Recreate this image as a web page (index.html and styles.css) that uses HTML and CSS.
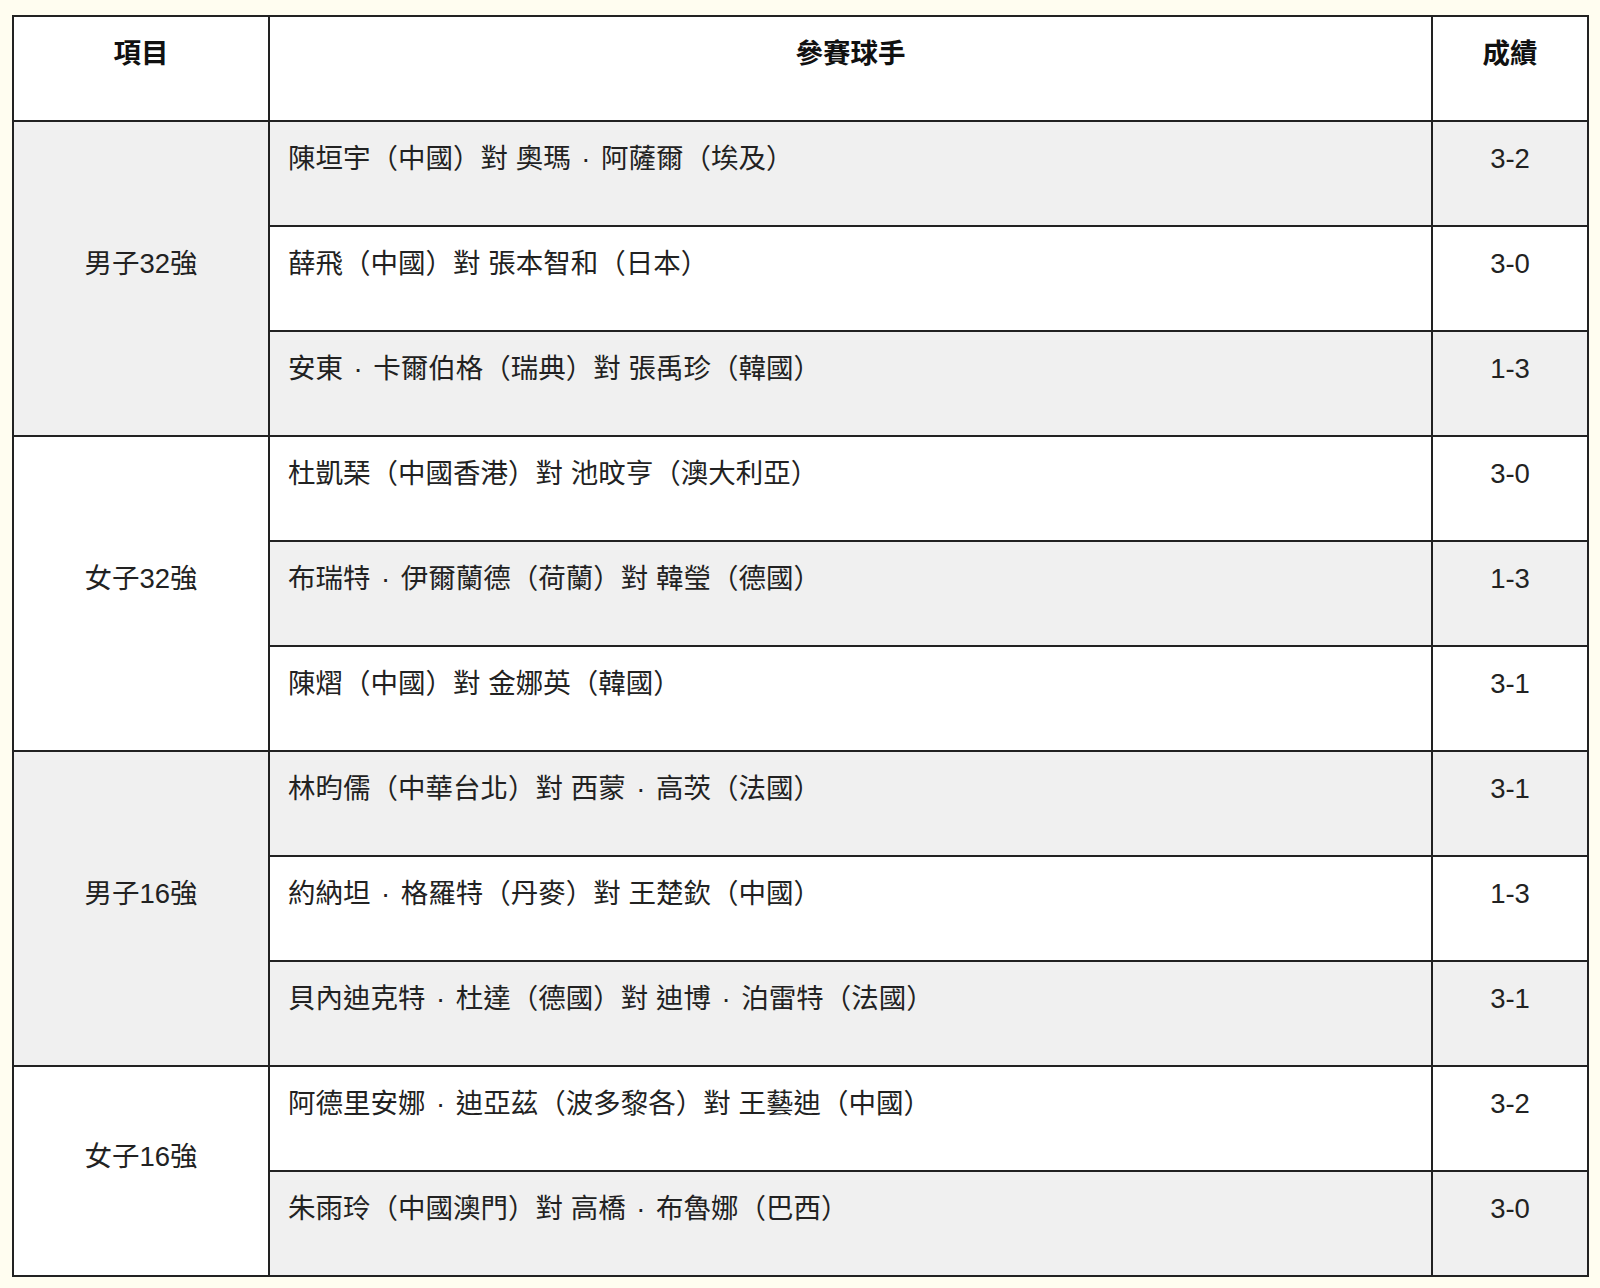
FILE: index.html
```html
<!DOCTYPE html>
<html lang="zh-Hant">
<head>
<meta charset="utf-8">
<title>賽果</title>
<link rel="stylesheet" href="styles.css">
</head>
<body>
<table class="results">
  <colgroup>
    <col class="c-event">
    <col class="c-players">
    <col class="c-score">
  </colgroup>
  <thead>
    <tr>
      <th><p>項目</p></th>
      <th><p>參賽球手</p></th>
      <th><p>成績</p></th>
    </tr>
  </thead>
  <tbody>
    <tr>
      <td class="event" rowspan="3"><p>男子32強</p></td>
      <td class="players"><p>陳垣宇（中國）對 奧瑪<span class="dot">·</span>阿薩爾（埃及）</p></td>
      <td class="score"><p>3-2</p></td>
    </tr>
    <tr>
      <td class="players"><p>薛飛（中國）對 張本智和（日本）</p></td>
      <td class="score"><p>3-0</p></td>
    </tr>
    <tr>
      <td class="players"><p>安東<span class="dot">·</span>卡爾伯格（瑞典）對 張禹珍（韓國）</p></td>
      <td class="score"><p>1-3</p></td>
    </tr>
    <tr>
      <td class="event" rowspan="3"><p>女子32強</p></td>
      <td class="players"><p>杜凱琹（中國香港）對 池旼亨（澳大利亞）</p></td>
      <td class="score"><p>3-0</p></td>
    </tr>
    <tr>
      <td class="players"><p>布瑞特<span class="dot">·</span>伊爾蘭德（荷蘭）對 韓瑩（德國）</p></td>
      <td class="score"><p>1-3</p></td>
    </tr>
    <tr>
      <td class="players"><p>陳熠（中國）對 金娜英（韓國）</p></td>
      <td class="score"><p>3-1</p></td>
    </tr>
    <tr>
      <td class="event" rowspan="3"><p>男子16強</p></td>
      <td class="players"><p>林昀儒（中華台北）對 西蒙<span class="dot">·</span>高茨（法國）</p></td>
      <td class="score"><p>3-1</p></td>
    </tr>
    <tr>
      <td class="players"><p>約納坦<span class="dot">·</span>格羅特（丹麥）對 王楚欽（中國）</p></td>
      <td class="score"><p>1-3</p></td>
    </tr>
    <tr>
      <td class="players"><p>貝內迪克特<span class="dot">·</span>杜達（德國）對 迪博<span class="dot">·</span>泊雷特（法國）</p></td>
      <td class="score"><p>3-1</p></td>
    </tr>
    <tr>
      <td class="event" rowspan="2"><p>女子16強</p></td>
      <td class="players"><p>阿德里安娜<span class="dot">·</span>迪亞茲（波多黎各）對 王藝迪（中國）</p></td>
      <td class="score"><p>3-2</p></td>
    </tr>
    <tr>
      <td class="players"><p>朱雨玲（中國澳門）對 高橋<span class="dot">·</span>布魯娜（巴西）</p></td>
      <td class="score"><p>3-0</p></td>
    </tr>
  </tbody>
</table>
</body>
</html>
```

FILE: styles.css
```css
html, body {
  margin: 0;
  padding: 0;
  background: #fffdf0;
}

body {
  padding: 15px 11px 0 12px;
  font-family: "Liberation Sans", "Noto Sans CJK TC", sans-serif;
  color: #222;
}

.results {
  width: 100%;
  border-collapse: collapse;
  border: 2px solid #222;
  table-layout: fixed;
  font-size: 27.5px;
}

.c-event { width: 256px; }
.c-score { width: 156px; }

.results th,
.results td {
  border: 2px solid #222;
  padding: 17px 18px;
  vertical-align: middle;
  text-align: center;
  background: #ffffff;
}

.results p {
  margin: 0 0 30px;
  line-height: 39px;
}

.results th {
  font-weight: bold;
  color: #111;
}

.results tbody tr:nth-child(odd) td {
  background: #f0f0f0;
}

.results td.players {
  text-align: left;
}

.dot {
  display: inline-block;
  width: 1.1em;
  text-align: center;
}
```
